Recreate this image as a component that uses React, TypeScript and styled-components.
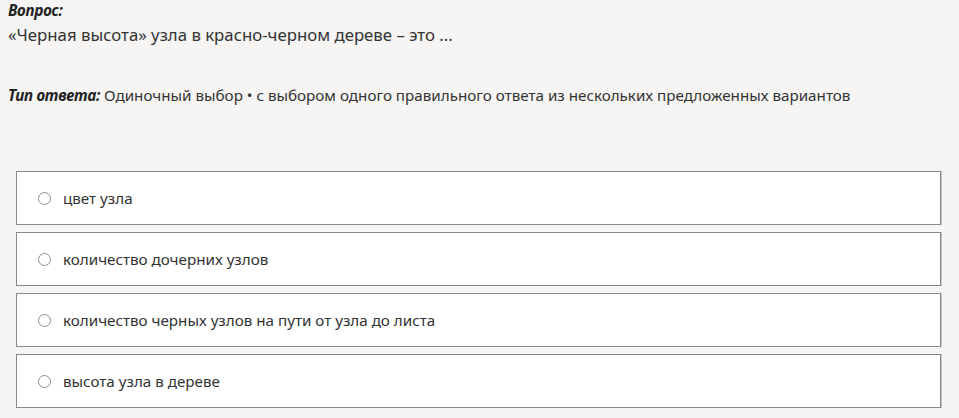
import styled, { createGlobalStyle } from 'styled-components';

const Global = createGlobalStyle`
  html, body {
    margin: 0;
    background: #f6f5f3;
  }
  body {
    padding: 0 18px 0 8px;
    font-family: 'Noto Sans', 'Open Sans', sans-serif;
    font-size: 15.2px;
    color: #333;
  }
`;

const options = [
  'цвет узла',
  'количество дочерних узлов',
  'количество черных узлов на пути от узла до листа',
  'высота узла в дереве',
];

const App = () => {
  return (
    <>
      <Global />
      <Styled.Page>
        <Styled.Label>Вопрос:</Styled.Label>
        <Styled.Question>«Черная высота» узла в красно-черном дереве – это ...</Styled.Question>
        <Styled.Type>
          <Styled.Label as='span'>Тип ответа:</Styled.Label> Одиночный выбор • с выбором одного правильного ответа из нескольких предложенных вариантов
        </Styled.Type>
        <Styled.Options>
          {options.map((text) => (
            <Styled.Option key={text}>
              <Styled.Radio />
              {text}
            </Styled.Option>
          ))}
        </Styled.Options>
      </Styled.Page>
    </>
  );
};

export default App;

const Styled = {
  Page: styled.div`
    display: flex;
    flex-direction: column;
    line-height: 20px;
  `,
  Label: styled.div`
    font-weight: 700;
    font-style: italic;
    color: #222;
    letter-spacing: -0.25px;
  `,
  Question: styled.div`
    margin-top: 5px;
    font-size: 16.8px;
  `,
  Type: styled.div`
    margin-top: 40px;
  `,
  Options: styled.div`
    display: flex;
    flex-direction: column;
    gap: 7px;
    margin: 66px 0 0 8px;
  `,
  Option: styled.label`
    display: flex;
    align-items: center;
    gap: 12px;
    height: 52px;
    padding-left: 21px;
    background: #fff;
    border: 1px solid #8a8a8a;
    box-shadow: 1px 0 0 #c4c4c4;
    cursor: pointer;
  `,
  Radio: styled.span`
    width: 11px;
    height: 11px;
    border: 1px solid #8c8c8c;
    border-radius: 50%;
    background: #fff;
  `,
};
